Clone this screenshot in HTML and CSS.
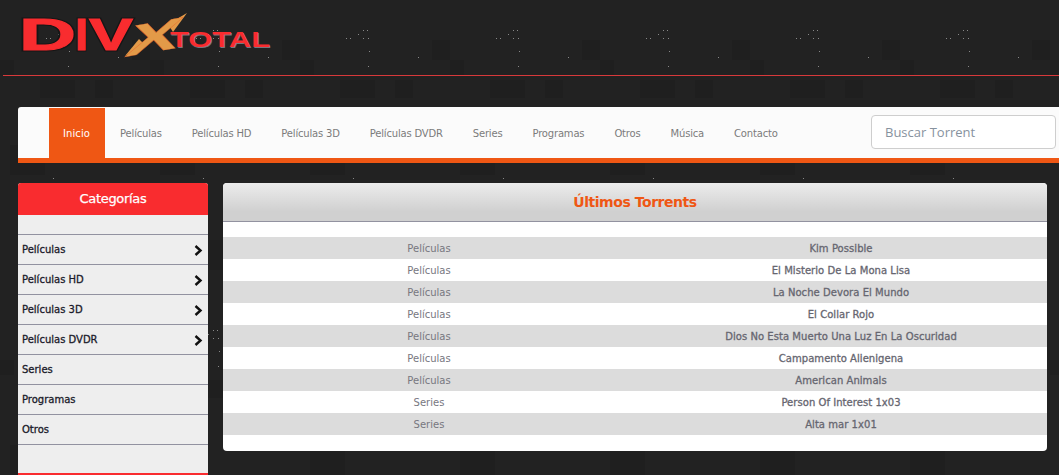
FILE: index.html
```html
<!DOCTYPE html>
<html lang="es">
<head>
<meta charset="utf-8">
<title>DivxTotal</title>
<link rel="stylesheet" href="styles.css">
</head>
<body>
<header class="site-header">
  <a class="logo" href="#" aria-label="DivxTotal">
    <svg width="260" height="60" viewBox="15 5 260 60">
      <g class="logo-shadow">
        <text x="19" y="50" class="big" textLength="57" lengthAdjust="spacingAndGlyphs">D</text>
        <text x="75" y="50" class="big" textLength="13" lengthAdjust="spacingAndGlyphs">I</text>
        <text x="89" y="50" class="big" textLength="44" lengthAdjust="spacingAndGlyphs">V</text>
      </g>
      <text x="19" y="50" class="big red" textLength="57" lengthAdjust="spacingAndGlyphs">D</text>
      <text x="75" y="50" class="big red" textLength="13" lengthAdjust="spacingAndGlyphs">I</text>
      <text x="89" y="50" class="big red" textLength="44" lengthAdjust="spacingAndGlyphs">V</text>
      <polygon class="flare" points="168,24 187,13 173,32"/>
      <polygon class="flare" points="125,56 139,39 146,46"/>
      <text class="ex" transform="matrix(1.948 -.337 -.342 1.13 124.1 57)">X</text>
      <text x="171" y="48" class="small grey" textLength="100" lengthAdjust="spacingAndGlyphs">TOTAL</text>
      <text x="170" y="47" class="small red" textLength="100" lengthAdjust="spacingAndGlyphs">TOTAL</text>
    </svg>
  </a>
</header>

<nav class="navbar">
  <ul class="menu">
    <li class="active"><a href="#">Inicio</a></li>
    <li><a href="#">Películas</a></li>
    <li><a href="#">Películas HD</a></li>
    <li><a href="#">Películas 3D</a></li>
    <li><a href="#">Películas DVDR</a></li>
    <li><a href="#">Series</a></li>
    <li><a href="#">Programas</a></li>
    <li><a href="#">Otros</a></li>
    <li><a href="#">Música</a></li>
    <li><a href="#">Contacto</a></li>
  </ul>
  <input class="search" type="text" placeholder="Buscar Torrent">
</nav>

<div class="content">
  <aside class="sidebar">
    <h3 class="side-title">Categorías</h3>
    <ul class="side-list">
      <li><a href="#">Películas<svg class="chev" viewBox="0 0 9 11"><path d="M1.5 1 6.5 5.5 1.5 10"/></svg></a></li>
      <li><a href="#">Películas HD<svg class="chev" viewBox="0 0 9 11"><path d="M1.5 1 6.5 5.5 1.5 10"/></svg></a></li>
      <li><a href="#">Películas 3D<svg class="chev" viewBox="0 0 9 11"><path d="M1.5 1 6.5 5.5 1.5 10"/></svg></a></li>
      <li><a href="#">Películas DVDR<svg class="chev" viewBox="0 0 9 11"><path d="M1.5 1 6.5 5.5 1.5 10"/></svg></a></li>
      <li><a href="#">Series</a></li>
      <li><a href="#">Programas</a></li>
      <li><a href="#">Otros</a></li>
    </ul>
  </aside>

  <main class="panel">
    <h2 class="panel-title">Últimos Torrents</h2>
    <table class="torrents">
      <tr><td>Películas</td><td class="name">Kim Possible</td></tr>
      <tr><td>Películas</td><td class="name">El Misterio De La Mona Lisa</td></tr>
      <tr><td>Películas</td><td class="name">La Noche Devora El Mundo</td></tr>
      <tr><td>Películas</td><td class="name">El Collar Rojo</td></tr>
      <tr><td>Películas</td><td class="name">Dios No Esta Muerto Una Luz En La Oscuridad</td></tr>
      <tr><td>Películas</td><td class="name">Campamento Alienigena</td></tr>
      <tr><td>Películas</td><td class="name">American Animals</td></tr>
      <tr><td>Series</td><td class="name">Person Of Interest 1x03</td></tr>
      <tr><td>Series</td><td class="name">Alta mar 1x01</td></tr>
    </table>
  </main>
</div>
</body>
</html>
```

FILE: styles.css
```css
* { box-sizing: border-box; }

html, body {
  margin: 0;
  height: 475px;
  overflow: hidden;
}

body {
  background-color: #222;
  background-image: url("data:image/svg+xml,%3Csvg xmlns='http://www.w3.org/2000/svg' width='150' height='300'%3E%3Cg fill='%231f1f1f'%3E%3Crect x='132' y='40' width='18' height='20'/%3E%3Crect x='0' y='60' width='14' height='15'/%3E%3Crect x='40' y='80' width='35' height='18'/%3E%3Crect x='95' y='80' width='18' height='18'/%3E%3Crect x='10' y='145' width='35' height='30'/%3E%3Crect x='125' y='195' width='15' height='25'/%3E%3Crect x='60' y='240' width='30' height='30'/%3E%3C/g%3E%3Cg fill='%23888'%3E%3Crect x='46' y='38' width='1' height='1'/%3E%3Crect x='50' y='38' width='1' height='1'/%3E%3Crect x='58' y='34' width='1' height='1'/%3E%3Crect x='63' y='30' width='1' height='1'/%3E%3Crect x='67' y='30' width='1' height='1'/%3E%3Crect x='63' y='38' width='1' height='1'/%3E%3Crect x='68' y='38' width='1' height='1'/%3E%3Crect x='69' y='51' width='1' height='1'/%3E%3Crect x='68' y='66' width='1' height='1'/%3E%3Crect x='118' y='57' width='1' height='1'/%3E%3Crect x='53' y='178' width='1' height='1'/%3E%3C/g%3E%3C/svg%3E");
  font-family: "DejaVu Sans", Tahoma, sans-serif;
  font-size: 10px;
}

a { color: inherit; text-decoration: none; }
ul { list-style: none; margin: 0; padding: 0; }

/* header */
.site-header {
  height: 76px;
  margin-left: 3px;
  border-bottom: 1px solid #d8393b;
}

.logo {
  display: block;
  width: 260px;
  height: 60px;
  margin-left: 12px;
  padding-top: 5px;
}

.logo svg { display: block; overflow: visible; }

.logo text { font-family: "Liberation Sans", Arial, sans-serif; font-weight: 700; }
.logo .big { font-size: 44px; }
.logo .big.red { stroke: #f92c2f; stroke-width: 1px; }
.logo .small { font-size: 22px; }
.logo .red { fill: #f92c2f; }
.logo .grey { fill: #77777f; }
.logo .ex { font-size: 40px; fill: #e39a48; stroke: #e8652a; stroke-width: .3px; }
.logo .flare { fill: #e39a48; }
.logo-shadow text { fill: #161616; stroke: #161616; stroke-width: 3px; }

/* nav */
.navbar {
  display: flex;
  align-items: center;
  justify-content: space-between;
  width: 1041px;
  height: 56px;
  margin: 31px 0 0 18px;
  padding: 1px 3px 0 31px;
  background: #fbfbfb;
  border-bottom: 5px solid #ef5714;
  border-top-left-radius: 3px;
}

.menu {
  display: flex;
  height: 50px;
  align-self: flex-start;
}

.menu a {
  display: block;
  height: 50px;
  padding: 0 15px;
  line-height: 51px;
  color: #7b7b7b;
  letter-spacing: -.18px;
  white-space: nowrap;
}

.menu .active a {
  padding: 0 15px 0 14px;
  background: #ef5714;
  color: #fff;
  letter-spacing: .1px;
}

.search {
  width: 185px;
  height: 34px;
  margin-top: -3px;
  padding: 0 13px;
  border: 1px solid #cecece;
  border-radius: 4px;
  background: #fff;
  font-family: "Open Sans", sans-serif;
  font-size: 13px;
  outline: 0;
}

.search::placeholder { color: #87929e; opacity: 1; }

/* columns */
.content {
  display: flex;
  align-items: flex-start;
  gap: 15px;
  margin: 20px 0 0 18px;
}

.sidebar {
  flex: none;
  width: 190px;
  height: 292px;
  background: #eee;
  border-bottom: 2px solid #f92c2f;
  border-radius: 3px 3px 0 0;
}

.side-title {
  height: 32px;
  margin: 0 0 19px;
  padding-top: 8px;
  background: #f92c2f;
  border-radius: 3px 3px 0 0;
  color: #fff;
  font-size: 13px;
  font-weight: 400;
  letter-spacing: -.3px;
  -webkit-text-stroke: .25px #fff;
  line-height: 16px;
  text-align: center;
}

.side-list { border-top: 1px solid #9292a0; }

.side-list li {
  height: 30px;
  border-bottom: 1px solid #9292a0;
}

.side-list a {
  display: flex;
  align-items: center;
  justify-content: space-between;
  height: 29px;
  padding: 0 5px 0 4px;
  color: #1a1a2a;
  -webkit-text-stroke: .3px #1a1a2a;
}

.chev {
  width: 9px;
  height: 11px;
  margin-top: 2px;
  fill: none;
  stroke: #111;
  stroke-width: 2.4;
}

.panel {
  flex: none;
  width: 824px;
  height: 268px;
  padding-bottom: 16px;
  background: #fff;
  border-radius: 4px;
}

.panel-title {
  height: 39px;
  margin: 0 0 15px;
  background: linear-gradient(#ececec, #d0d0d0 75%);
  border-bottom: 1px solid #9292a0;
  border-radius: 4px 4px 0 0;
  color: #ef5714;
  font-size: 14px;
  font-weight: 700;
  letter-spacing: -.45px;
  line-height: 38px;
  text-align: center;
}

.torrents {
  width: 100%;
  table-layout: fixed;
  border-collapse: collapse;
}

.torrents td {
  height: 22px;
  padding: 0;
  color: #77777f;
  text-align: center;
}

.torrents tr:nth-child(odd) { background: #dcdcdc; }

.torrents .name {
  color: #666670;
  letter-spacing: .05px;
  -webkit-text-stroke: .3px #666670;
}
```
